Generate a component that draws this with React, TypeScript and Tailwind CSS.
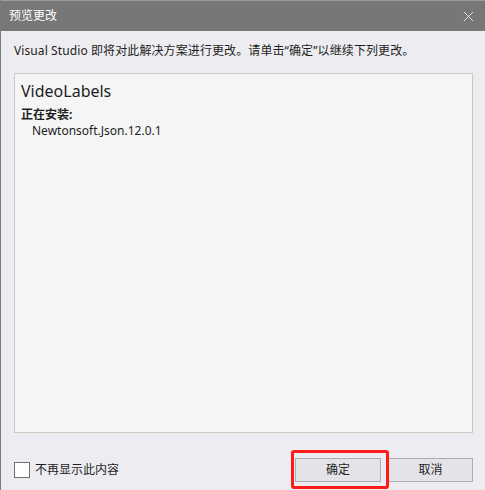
import { X } from 'lucide-react';

const font = '[font-family:"Noto_Sans","Noto_Sans_CJK_SC",sans-serif]';

export default function App() {
  return (
    <div className={`relative w-[485px] h-[490px] bg-[#ededf1] border-l border-[#7a7a7a] flex flex-col text-[12px] text-[#1e1e1e] ${font}`}>
      {/* title bar */}
      <div className="h-[31px] bg-[#777777] border-t border-[#9a9a9a] flex items-center justify-between pl-[8px] pr-[8px] text-white">
        <span className="text-[12px] leading-none">预览更改</span>
        <X className="h-[17px] w-[17px]" strokeWidth={1.1} />
      </div>

      <div className="flex-1 flex flex-col px-[13px] pr-[12px]">
        <p className="mt-[12px] leading-[16px] h-[17px] tracking-[0.1px]">
          Visual Studio 即将对此解决方案进行更改。请单击“确定”以继续下列更改。
        </p>

        {/* changes panel */}
        <div className="mt-[13px] h-[360px] bg-[#f5f5f5] border-[1.5px] border-[#c9c9bf] pl-[6px] pt-[6px]">
          <div className="text-[16px] leading-[22px]">VideoLabels</div>
          <div className="mt-[5px] font-bold leading-[16px]">正在安装:</div>
          <div className="pl-[11px] leading-[16px]">Newtonsoft.Json.12.0.1</div>
        </div>

        {/* footer */}
        <div className="mt-[25px] flex items-center justify-between">
          <label className="flex items-center gap-[5px]">
            <span className="w-[16px] h-[16px] bg-white border border-[#707070]" />
            <span className="leading-none">不再显示此内容</span>
          </label>
          <div className="flex gap-[7px]">
            <button className="w-[86px] h-[24px] bg-[#e4e4e8] border border-[#adadad] leading-none">确定</button>
            <button className="w-[85px] h-[24px] bg-[#e4e4e8] border border-[#adadad] leading-none">取消</button>
          </div>
        </div>
      </div>

      {/* red highlight annotation */}
      <div className="absolute left-[290px] top-[450px] w-[98px] h-[39px] border-[3px] border-[#ff1a1a] rounded-[3px]" />
    </div>
  );
}
